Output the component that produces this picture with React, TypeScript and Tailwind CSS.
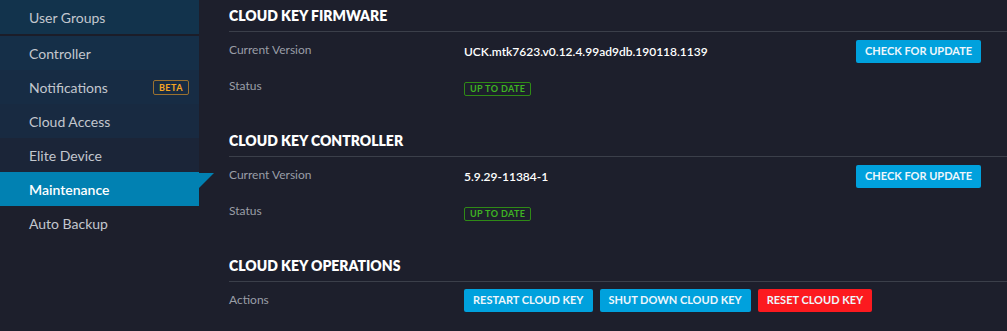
const navItems = [
  { label: "User Groups", bg: "bg-[#12334c]" },
  { label: "Controller", bg: "bg-[#152f48]" },
  { label: "Notifications", bg: "bg-[#172c44]", beta: true },
  { label: "Cloud Access", bg: "bg-[#182a41]" },
  { label: "Elite Device", bg: "bg-[#1b2538]" },
  { label: "Maintenance", active: true },
  { label: "Auto Backup", bg: "bg-[#1d1f2c]" },
]

function NavItem({ label, bg, beta, active }: { label: string; bg?: string; beta?: boolean; active?: boolean }) {
  if (active) {
    return (
      <div className="relative flex h-[34px] items-center bg-[#0181b2] pl-[29px] text-[14px] font-semibold text-white">
        {label}
        <span
          className="absolute top-[1px] left-full h-0 w-0 border-t-[15px] border-r-[15px] border-t-[#0181b2] border-r-transparent"
          aria-hidden="true"
        />
      </div>
    )
  }
  return (
    <div className={`flex h-[34px] items-center justify-between pr-[10px] pl-[29px] text-[14px] text-[#c3c7ce] ${bg}`}>
      <span>{label}</span>
      {beta && (
        <span className="rounded-[2px] border border-[#9a7130] px-[5px] text-[9px] leading-[13px] font-bold tracking-[0.5px] text-[#f5a623]">
          BETA
        </span>
      )}
    </div>
  )
}

function Row({ label, children, action }: { label: string; children: React.ReactNode; action?: React.ReactNode }) {
  return (
    <div className="flex h-[36px] items-center">
      <div className="w-[235px] text-[12px] text-[#9a9ea7]">{label}</div>
      <div className="flex-1">{children}</div>
      {action && <div className="w-[151px]">{action}</div>}
    </div>
  )
}

function Button({ children, red }: { children: React.ReactNode; red?: boolean }) {
  return (
    <button
      className={`h-[23px] rounded-[2px] px-[9px] text-[11px] font-bold text-[#eef6fb] ${red ? "bg-[#fc1a1f]" : "bg-[#00a1dd]"}`}
    >
      {children}
    </button>
  )
}

function UpToDate() {
  return (
    <span className="inline-block rounded-[2px] border border-[#2f8a16] px-[5px] text-[9px] leading-[12px] font-bold tracking-[0.4px] text-[#3fb323]">
      UP TO DATE
    </span>
  )
}

function Section({ title, children }: { title: string; children: React.ReactNode }) {
  return (
    <section>
      <h2 className="flex h-[32px] items-center border-b border-[#3b3f4a] text-[14px] font-extrabold text-white">
        {title}
      </h2>
      {children}
    </section>
  )
}

export default function App() {
  return (
    <div className="flex h-[331px] w-[1007px] overflow-hidden bg-[#1d1f2c] font-['Lato','Noto_Sans',sans-serif]">
      <nav className="w-[199px] shrink-0">
        <NavItem {...navItems[0]} />
        <div className="h-[2px] bg-[#1b1d29]" />
        {navItems.slice(1).map((item) => (
          <NavItem key={item.label} {...item} />
        ))}
      </nav>

      <main className="flex-1 pl-[30px]">
        <Section title="CLOUD KEY FIRMWARE">
          <Row label="Current Version" action={<Button>CHECK FOR UPDATE</Button>}>
            <span className="text-[12px] font-semibold text-white">UCK.mtk7623.v0.12.4.99ad9db.190118.1139</span>
          </Row>
          <Row label="Status">
            <UpToDate />
          </Row>
        </Section>

        <div className="h-[21px]" />
        <Section title="CLOUD KEY CONTROLLER">
          <Row label="Current Version" action={<Button>CHECK FOR UPDATE</Button>}>
            <span className="text-[12px] font-semibold text-white">5.9.29-11384-1</span>
          </Row>
          <Row label="Status">
            <UpToDate />
          </Row>
        </Section>

        <div className="h-[21px]" />
        <Section title="CLOUD KEY OPERATIONS">
          <Row label="Actions">
            <div className="flex gap-[7px]">
              <Button>RESTART CLOUD KEY</Button>
              <Button>SHUT DOWN CLOUD KEY</Button>
              <Button red>RESET CLOUD KEY</Button>
            </div>
          </Row>
        </Section>
      </main>
    </div>
  )
}
